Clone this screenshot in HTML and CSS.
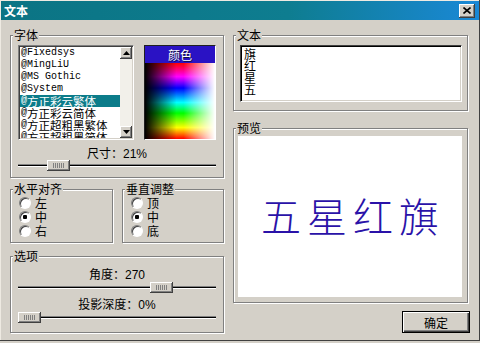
FILE: index.html
```html
<!DOCTYPE html>
<html lang="zh-CN">
<head>
    <meta charset="UTF-8">
    <meta name="viewport" content="width=device-width, initial-scale=1.0">
    <title>文本</title>
    <link rel="stylesheet" href="styles.css">
</head>
<body>
    <div class="window">
        <div class="titlebar">
            <span class="title">文本</span>
            <button class="close-btn">
                <svg width="8" height="7" viewBox="0 0 8 7">
                    <path d="M0.5 0.5 L7.5 6.5 M7.5 0.5 L0.5 6.5" stroke="#000" stroke-width="1.6" fill="none"/>
                </svg>
            </button>
        </div>

        <div class="content">
            <div class="col">
                <fieldset class="group group-font">
                    <legend>字体</legend>
                    <div class="font-body">
                        <div class="font-row">
                            <div class="listbox">
                                <ul class="list-items">
                                    <li>@Fixedsys</li>
                                    <li>@MingLiU</li>
                                    <li>@MS Gothic</li>
                                    <li>@System</li>
                                    <li class="selected">@<span class="cjk">方正彩云繁体</span></li>
                                    <li>@<span class="cjk">方正彩云简体</span></li>
                                    <li>@<span class="cjk">方正超粗黑繁体</span></li>
                                    <li>@<span class="cjk">方正超粗黑简体</span></li>
                                </ul>
                                <div class="scrollbar">
                                    <div class="sb-btn">
                                        <svg width="7" height="4" viewBox="0 0 7 4"><path d="M3.5 0 L7 4 L0 4 Z" fill="#000"/></svg>
                                    </div>
                                    <div class="sb-track"></div>
                                    <div class="sb-btn">
                                        <svg width="7" height="4" viewBox="0 0 7 4"><path d="M0 0 L7 0 L3.5 4 Z" fill="#000"/></svg>
                                    </div>
                                </div>
                            </div>
                            <div class="color-box">
                                <div class="color-head">颜色</div>
                                <div class="color-map"></div>
                            </div>
                        </div>
                        <div class="slider-label">尺寸：21%</div>
                        <div class="slider"><div class="thumb" style="margin-left: 29px"></div></div>
                    </div>
                </fieldset>

                <div class="align-row">
                    <fieldset class="group group-radio">
                        <legend>水平对齐</legend>
                        <div class="radio-body">
                            <label class="radio-row"><input type="radio" name="halign"> 左</label>
                            <label class="radio-row"><input type="radio" name="halign" checked> 中</label>
                            <label class="radio-row"><input type="radio" name="halign"> 右</label>
                        </div>
                    </fieldset>
                    <fieldset class="group group-radio">
                        <legend>垂直调整</legend>
                        <div class="radio-body">
                            <label class="radio-row"><input type="radio" name="valign"> 顶</label>
                            <label class="radio-row"><input type="radio" name="valign" checked> 中</label>
                            <label class="radio-row"><input type="radio" name="valign"> 底</label>
                        </div>
                    </fieldset>
                </div>

                <fieldset class="group group-opts">
                    <legend>选项</legend>
                    <div class="opts-body">
                        <div class="slider-label">角度：270</div>
                        <div class="slider slider-tight"><div class="thumb" style="margin-left: 132px"></div></div>
                        <div class="slider-label label-gap">投影深度：0%</div>
                        <div class="slider slider-tight"><div class="thumb" style="margin-left: 0px"></div></div>
                    </div>
                </fieldset>
            </div>

            <div class="col">
                <fieldset class="group group-text">
                    <legend>文本</legend>
                    <div class="text-body">
                        <div class="text-input">旗
红
星
五</div>
                    </div>
                </fieldset>

                <fieldset class="group group-preview">
                    <legend>预览</legend>
                    <div class="preview-body">
                        <div class="preview">
                            <span class="preview-text">五星红旗</span>
                        </div>
                    </div>
                </fieldset>

                <div class="button-row">
                    <button class="ok-btn">确定</button>
                </div>
            </div>
        </div>
    </div>
</body>
</html>
```

FILE: styles.css
```css
* {
    box-sizing: border-box;
}
body {
    margin: 0;
    background-color: #d4d0c8;
    font-family: "Liberation Sans", "Noto Sans CJK SC", sans-serif;
    font-size: 12px;
    line-height: 12px;
    color: #000;
}
.window {
    width: 480px;
    height: 341px;
    padding: 1px;
    background-color: #d4d0c8;
    box-shadow: inset -1px -1px #404040, inset 1px 1px #eeeae2;
}
.titlebar {
    height: 19px;
    display: flex;
    align-items: center;
    justify-content: space-between;
    padding: 0 4px 0 3px;
    background: linear-gradient(to right, #0b7484, #0e7d90 60%, #1a88d6);
    color: white;
}
.title {
    font-family: "Noto Sans CJK SC", sans-serif;
    font-weight: bold;
    font-size: 12px;
}
.close-btn {
    width: 16px;
    height: 14px;
    padding: 0;
    border: none;
    display: flex;
    align-items: center;
    justify-content: center;
    background-color: #d4d0c8;
    box-shadow: inset -1px -1px #404040, inset 1px 1px #fff, inset -2px -2px #808080;
}
.content {
    display: grid;
    grid-template-columns: 215px 236px;
    column-gap: 8px;
    padding: 8px 0 0 9px;
}
.col {
    display: flex;
    flex-direction: column;
}
.group {
    margin: 0;
    padding: 0;
    min-width: 0;
    width: calc(100% - 1px);
    border: 1px solid #808080;
    box-shadow: inset 1px 1px #fff, 1px 1px #fff;
}
.group legend {
    margin-left: 2px;
    padding: 0 1px;
    height: 14px;
    line-height: 14px;
    font-family: "Noto Sans CJK SC", sans-serif;
    background-color: #d4d0c8;
}
.group-font {
    height: 150px;
}
.font-body {
    padding: 3px 7px 0;
}
.font-row {
    display: flex;
    gap: 10px;
    height: 95px;
}
.listbox {
    display: flex;
    width: 116px;
    height: 95px;
    padding: 1px;
    background-color: white;
    border: 1px solid;
    border-color: #808080 #fff #fff #808080;
    box-shadow: inset 1px 1px #404040, inset -1px -1px #d4d0c8;
}
.list-items {
    flex: 1;
    margin: 0;
    padding: 0;
    list-style: none;
    overflow: hidden;
}
.list-items li {
    height: 12px;
    padding-left: 1px;
    display: flex;
    align-items: center;
    font-family: "Liberation Mono", monospace;
    font-size: 10px;
    white-space: nowrap;
    overflow: hidden;
}
.list-items .cjk {
    font-family: "Noto Sans CJK SC", sans-serif;
    font-size: 11.5px;
    line-height: 12px;
}
.list-items li.selected {
    background-color: #0c7c8a;
    color: white;
}
.scrollbar {
    width: 12px;
    display: flex;
    flex-direction: column;
    background-color: #f2f0ea;
}
.sb-btn {
    height: 12px;
    display: flex;
    align-items: center;
    justify-content: center;
    background-color: #d4d0c8;
    box-shadow: inset -1px -1px #404040, inset 1px 1px #fff, inset -2px -2px #808080;
}
.sb-track {
    flex: 1;
}
.color-box {
    width: 72px;
    display: flex;
    flex-direction: column;
    border: 1px solid;
    border-color: #202020 #fff #fff #202020;
}
.color-head {
    height: 17px;
    line-height: 17px;
    text-align: center;
    background-color: #2a12c4;
    color: white;
    font-family: "Noto Sans CJK SC", sans-serif;
    text-shadow: 1px 1px #101040;
}
.color-map {
    flex: 1;
    background:
        linear-gradient(to right, #000 0%, rgba(0,0,0,0) 45%, rgba(255,255,255,0) 55%, #fff 100%),
        linear-gradient(to bottom, #f00 0%, #f0f 18%, #00f 33%, #0ff 52%, #0f0 66%, #ff0 85%, #f00 100%);
}
.slider-label {
    margin-top: 8px;
    height: 12px;
    line-height: 12px;
    text-align: center;
}
.slider {
    height: 11px;
    display: flex;
    align-items: center;
    background: linear-gradient(to bottom, transparent 4px, #808080 4px 5px, #000 5px 6px, #fff 6px 7px, transparent 7px);
}
.slider-tight {
    margin-top: 1px;
}
.thumb {
    width: 23px;
    height: 11px;
    background:
        repeating-linear-gradient(to right, #808080 0 1px, #d4d0c8 1px 2px) center / 11px 5px no-repeat,
        #d4d0c8;
    box-shadow: inset -1px -1px #404040, inset 1px 1px #fff, inset -2px -2px #808080;
}
.align-row {
    display: grid;
    grid-template-columns: 104px 103px;
    column-gap: 8px;
    margin-top: 4px;
}
.group-radio {
    height: 61px;
}
.radio-body {
    padding: 0 8px;
}
.radio-row {
    height: 14px;
    display: flex;
    align-items: center;
    gap: 4px;
    font-family: "Noto Sans CJK SC", sans-serif;
}
.radio-row input {
    appearance: none;
    width: 12px;
    height: 12px;
    margin: 0;
    border-radius: 50%;
    border: 1px solid;
    border-color: #808080 #fff #fff #808080;
    background: radial-gradient(circle at 55% 55%, #fff 60%, #e8e6e0);
    box-shadow: inset 1px 1px #404040;
}
.radio-row input:checked {
    background: radial-gradient(circle, #000 0 2px, #fff 2.5px);
}
.group-opts {
    height: 84px;
    margin-top: 6px;
}
.opts-body {
    padding: 0 7px;
}
.opts-body .slider-label {
    margin-top: 6px;
}
.group-text {
    height: 83px;
}
.text-body {
    padding: 3px 5px 0 6px;
}
.text-input {
    width: 222px;
    height: 57px;
    padding: 2px 3px;
    background-color: white;
    border: 1px solid;
    border-color: #404040 #fff #fff #404040;
    box-shadow: inset 1px 1px #000, inset -1px -1px #d4d0c8;
    white-space: pre-line;
    font-family: "Noto Sans CJK SC", sans-serif;
    line-height: 12px;
}
.group-preview {
    height: 182px;
    margin-top: 10px;
}
.preview-body {
    padding: 1px 4px 0;
}
.preview {
    width: 224px;
    height: 161px;
    display: flex;
    align-items: center;
    justify-content: center;
    padding-bottom: 3px;
    background-color: white;
}
.preview-text {
    padding-left: 6px;
    font-family: "Noto Sans CJK SC", sans-serif;
    font-size: 40px;
    font-weight: 300;
    letter-spacing: 6px;
    line-height: 44px;
    color: #2a12a8;
}
.button-row {
    display: flex;
    justify-content: flex-end;
    margin-top: 8px;
    margin-right: -1px;
}
.ok-btn {
    width: 68px;
    height: 22px;
    padding: 0;
    border: 1px solid #000;
    background-color: #d4d0c8;
    box-shadow: inset 1px 1px #fff, inset -1px -1px #404040, inset -2px -2px #808080;
    font-family: "Noto Sans CJK SC", sans-serif;
    font-size: 12px;
    color: #000;
}
```
